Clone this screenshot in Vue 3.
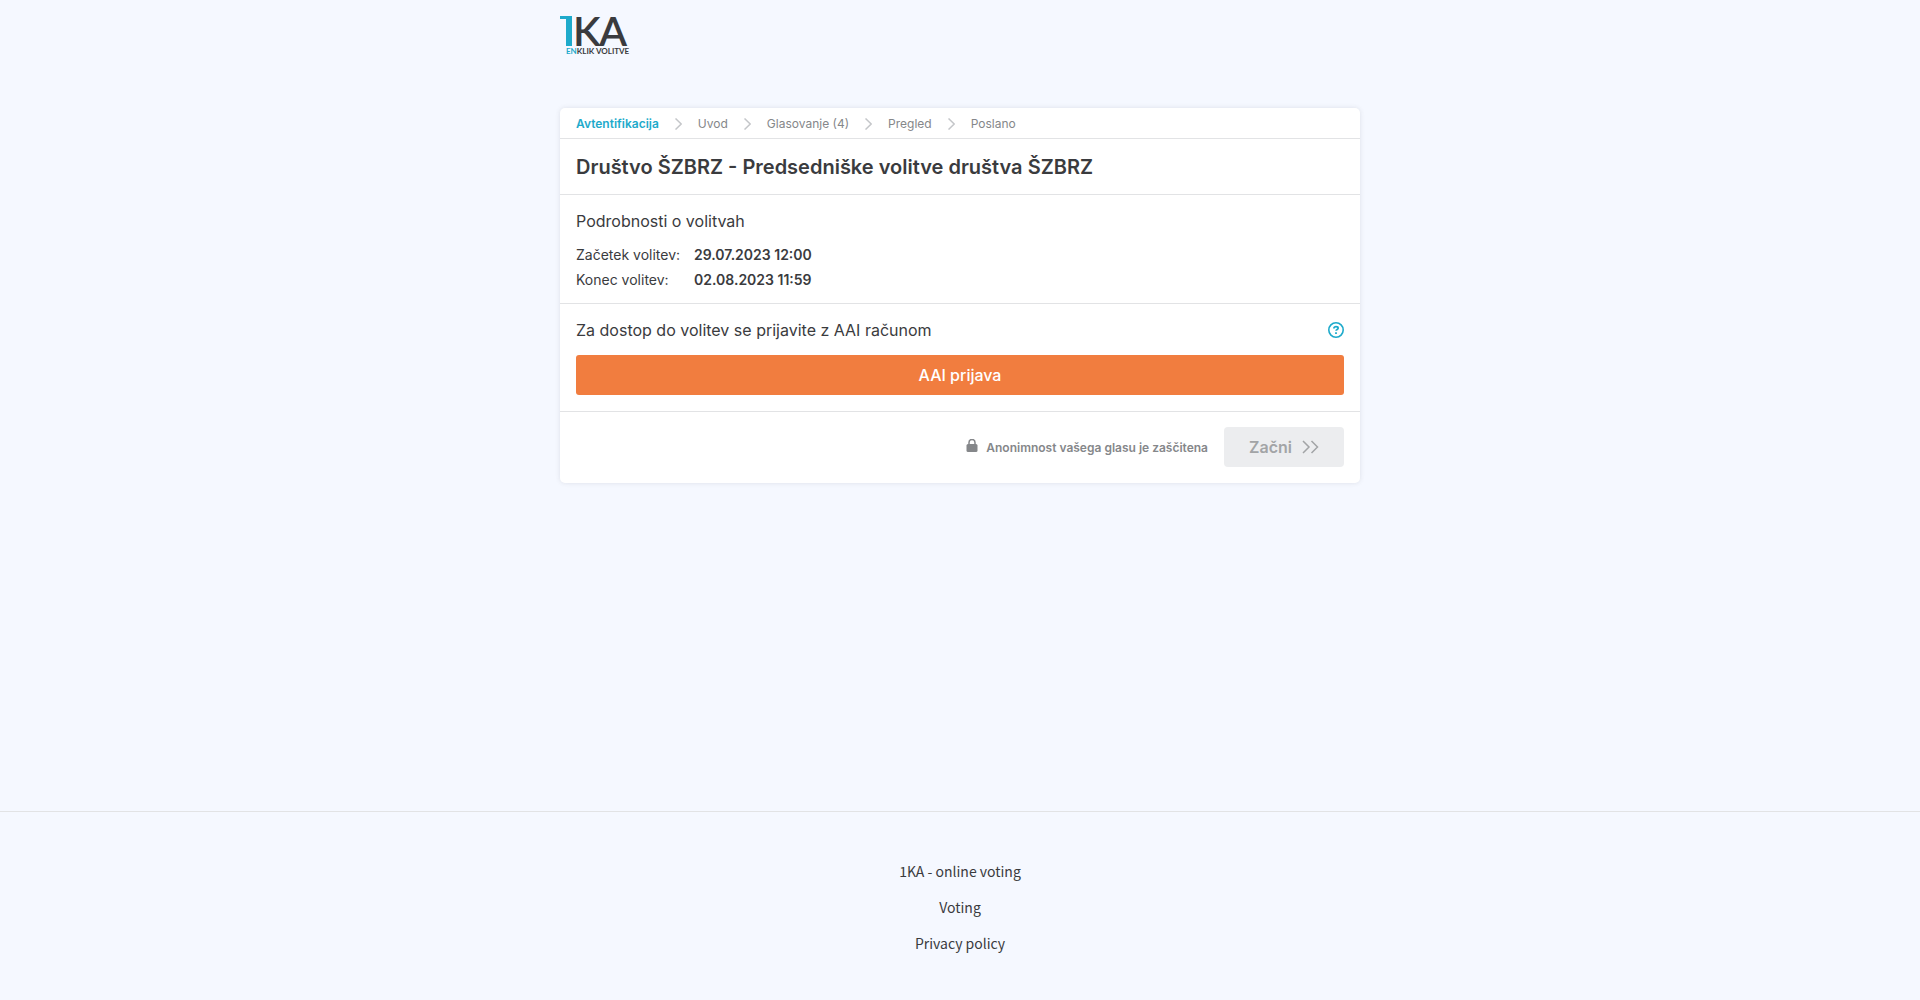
<script setup>
const steps = ['Avtentifikacija', 'Uvod', 'Glasovanje (4)', 'Pregled', 'Poslano']

const details = [
  { label: 'Začetek volitev:', value: '29.07.2023 12:00' },
  { label: 'Konec volitev:', value: '02.08.2023 11:59' },
]

const links = ['1KA - online voting', 'Voting', 'Privacy policy']
</script>

<template>
  <div class="page">
    <header class="header">
      <a class="logo" href="#" aria-label="1KA Enklik volitve">
        <svg width="80" height="60" viewBox="0 0 80 60">
          <path class="logo-one" d="M0 12h12v30H6V15H0z" />
          <text class="logo-big" x="13" y="42">K</text>
          <text class="logo-big" x="39" y="42">A</text>
          <text class="logo-small" x="6" y="50"><tspan class="logo-accent">EN</tspan>KLIK VOLITVE</text>
        </svg>
      </a>
    </header>

    <main class="card">
      <nav class="steps">
        <ol>
          <li v-for="(step, i) in steps" :key="step" :class="{ active: i === 0 }">
            <svg v-if="i > 0" class="chevron" width="7" height="12" viewBox="0 0 7 12">
              <path d="M.500.500L6.200 6 .500 11.500" />
            </svg>
            <span>{{ step }}</span>
          </li>
        </ol>
      </nav>

      <h1 class="title">Društvo ŠZBRZ - Predsedniške volitve društva ŠZBRZ</h1>

      <section class="section">
        <h2>Podrobnosti o volitvah</h2>
        <dl class="details">
          <template v-for="item in details" :key="item.label">
            <dt>{{ item.label }}</dt>
            <dd>{{ item.value }}</dd>
          </template>
        </dl>
      </section>

      <section class="section">
        <div class="section-head">
          <h2>Za dostop do volitev se prijavite z AAI računom</h2>
          <button class="help" type="button" aria-label="Pomoč">
            <svg width="16" height="16" viewBox="0 0 16 16">
              <circle cx="8" cy="8" r="7.200" />
              <path class="mark" d="M5.900 6.400c0-1.100.9-1.700 2.100-1.700s2.100.6 2.100 1.500c0 1.200-2 1.200-2 2.600M8 10.300v1.800" />
            </svg>
          </button>
        </div>
        <button class="login" type="button">AAI prijava</button>
      </section>

      <div class="actions">
        <p class="privacy">
          <svg width="12" height="13" viewBox="0 0 12 13">
            <path class="shackle" d="M3 6V3.500a3 3 0 0 1 6 0V6" />
            <rect x="0.500" y="5" width="11" height="8" rx="1.500" />
          </svg>
          <span>Anonimnost vašega glasu je zaščitena</span>
        </p>
        <button class="start" type="button" disabled>
          <span>Začni</span>
          <svg width="17" height="14" viewBox="0 0 17 14">
            <path d="M1 1l6 6-6 6M9.500 1l6 6-6 6" />
          </svg>
        </button>
      </div>
    </main>

    <footer class="footer">
      <a v-for="link in links" :key="link" href="#">{{ link }}</a>
    </footer>
  </div>
</template>

<style>
body {
  margin: 0;
  background: #f5f8ff;
}
</style>

<style scoped>
.page {
  display: flex;
  flex-direction: column;
  box-sizing: border-box;
  min-height: 100vh;
  background: #f5f8ff;
  color: #3a3b3e;
  font-family: Inter, "Liberation Sans", sans-serif;
}

button {
  border: 0;
  padding: 0;
  font-family: inherit;
}

.header {
  box-sizing: border-box;
  width: 100%;
  max-width: 800px;
  height: 108px;
  margin: 0 auto;
  padding-top: 4px;
}

.logo,
.logo svg {
  display: block;
  width: 80px;
}

.logo-big,
.logo-small {
  fill: #3a3b3e;
  font-family: Lato, sans-serif;
}

.logo-one,
.logo-accent {
  fill: #1eaacb;
}

.logo-big {
  font-size: 41px;
  font-weight: 600;
}

.logo-small {
  font-size: 8px;
  font-weight: 700;
}

.card {
  width: 100%;
  max-width: 800px;
  margin: 0 auto;
  border-radius: 5px;
  background: #fff;
  box-shadow: 0 0 5px rgba(58, 59, 62, 0.12);
}

.steps {
  padding: 2px 16px 0;
  border-bottom: 1px solid #e2e3e5;
}

.steps ol {
  display: flex;
  margin: 0;
  padding: 0;
  list-style: none;
}

.steps li {
  display: flex;
  align-items: center;
  color: #85878a;
  font-size: 12px;
  line-height: 28px;
}

.steps .active {
  color: #1eaacb;
  font-weight: 600;
}

.chevron {
  margin: 0 16px;
  fill: none;
  stroke: #c4c6c9;
  stroke-width: 1.5;
}

.title {
  margin: 0;
  padding: 12px 16px 11px;
  border-bottom: 1px solid #e2e3e5;
  font-size: 20px;
  font-weight: 600;
  line-height: 32px;
}

.section {
  padding: 16px;
  border-bottom: 1px solid #e2e3e5;
}

h2 {
  margin: 0;
  font-size: 16px;
  font-weight: 400;
  line-height: 20px;
}

.details {
  display: grid;
  grid-template-columns: 118px 1fr;
  margin: 11px 0 -5px;
  font-size: 14px;
  line-height: 25px;
}

.details dd {
  margin: 0;
  font-weight: 600;
}

.section-head {
  display: flex;
  align-items: center;
  justify-content: space-between;
  margin-bottom: 15px;
}

.help {
  display: flex;
  background: none;
}

.help svg {
  fill: none;
  stroke: #1eaacb;
  stroke-width: 1.6;
}

.help .mark {
  stroke-width: 1.8;
}

.login {
  display: block;
  width: 100%;
  height: 40px;
  border-radius: 3px;
  background: #f17d3f;
  color: #fff;
  font-size: 16px;
  font-weight: 500;
}

.actions {
  display: flex;
  align-items: center;
  justify-content: flex-end;
  gap: 16px;
  padding: 15px 16px 16px;
}

.privacy {
  display: flex;
  align-items: center;
  gap: 8px;
  margin: 0;
  color: #85878a;
  font-size: 12px;
  font-weight: 600;
}

.privacy svg {
  margin-bottom: 3px;
  fill: #85878a;
}

.privacy .shackle {
  fill: none;
  stroke: #85878a;
  stroke-width: 1.5;
}

.start {
  display: flex;
  align-items: center;
  justify-content: center;
  gap: 10px;
  width: 120px;
  height: 40px;
  border-radius: 4px;
  background: #ecedef;
  color: #a2a4a6;
  font-size: 16px;
  font-weight: 600;
}

.start svg {
  fill: none;
  stroke: #a2a4a6;
  stroke-width: 1.5;
}

.footer {
  display: flex;
  flex-direction: column;
  align-items: center;
  gap: 12px;
  margin-top: auto;
  padding: 47px 16px 45px;
  border-top: 1px solid #e2e3e5;
}

.footer a {
  color: #3a3b3e;
  font-family: "Noto Sans CJK SC", "Noto Sans", sans-serif;
  font-size: 14px;
  line-height: 24px;
  text-decoration: none;
}
</style>
